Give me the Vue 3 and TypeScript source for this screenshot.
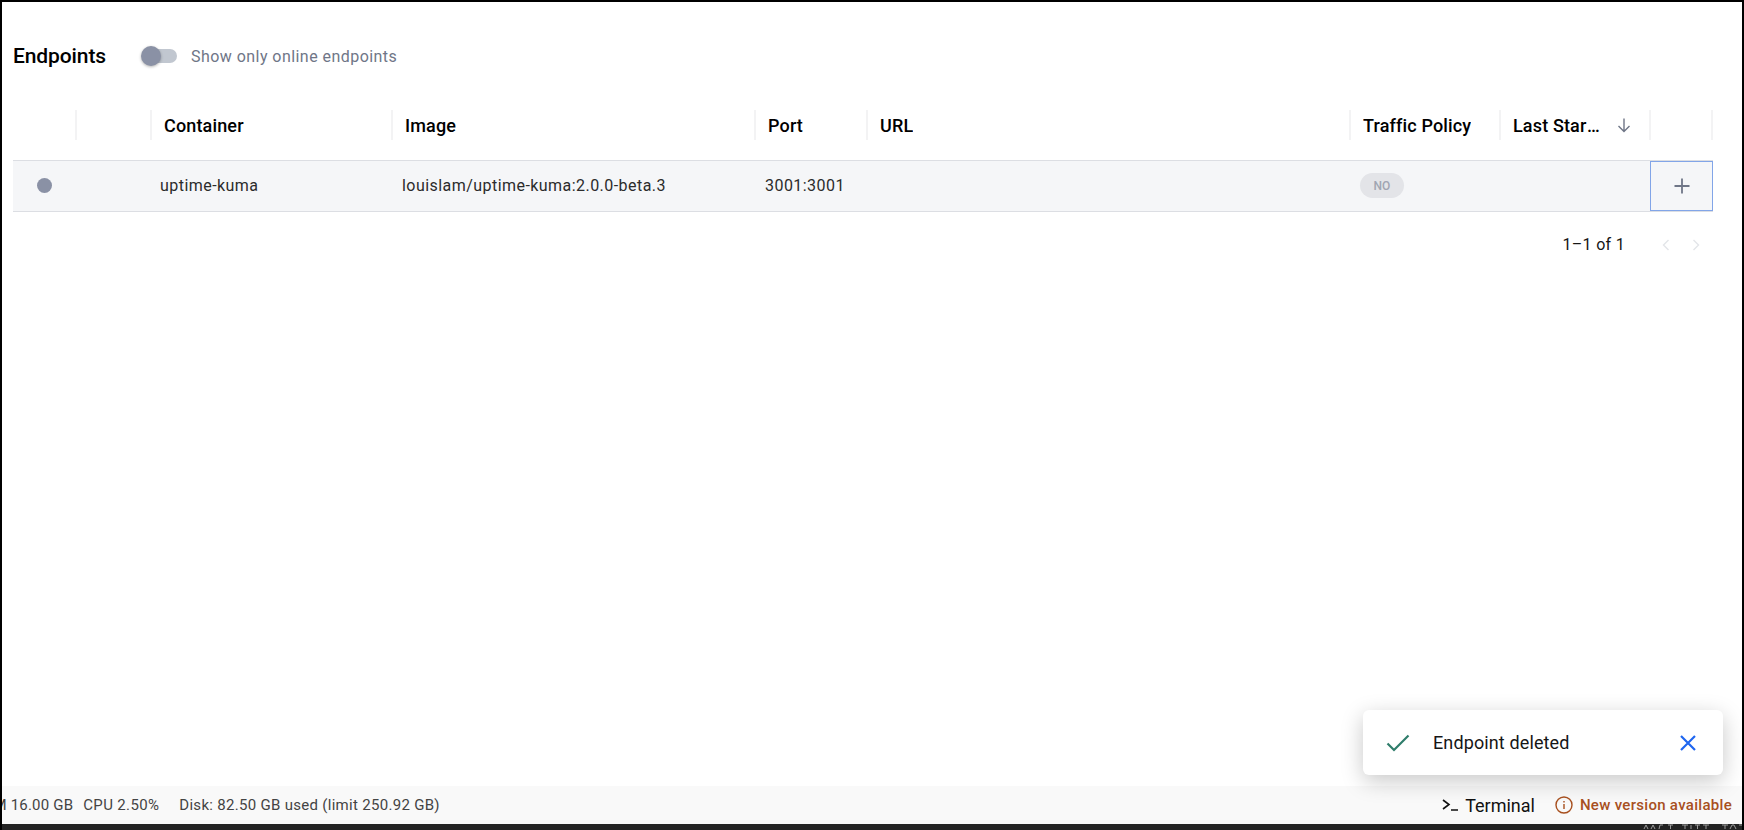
<script setup lang="ts">
interface Col { label: string; width: number; cls?: string }
const columns: Col[] = [
  { label: '', width: 64 },
  { label: '', width: 75 },
  { label: 'Container', width: 241 },
  { label: 'Image', width: 363 },
  { label: 'Port', width: 112 },
  { label: 'URL', width: 483 },
  { label: 'Traffic Policy', width: 150 },
  { label: 'Last Started', width: 150, cls: 'sorted' },
  { label: '', width: 62 },
]
</script>

<template>
  <div class="frame">
    <main class="content">
      <header class="title-row">
        <h2 class="title">Endpoints</h2>
        <label class="switch-row">
          <span class="switch"><span class="track"></span><span class="thumb"></span></span>
          <span class="switch-label">Show only online endpoints</span>
        </label>
      </header>

      <div class="head-row">
        <div v-for="(c, i) in columns" :key="i" class="head-cell" :class="c.cls" :style="{ width: c.width + 'px' }">
          <span class="head-label">{{ c.label }}</span>
          <svg v-if="c.cls" class="sort-icon" viewBox="0 0 16 16" fill="none" stroke="#6f7687" stroke-width="1.4">
            <path d="M8 1.500v13M2.500 9 8 14.500 13.500 9" />
          </svg>
        </div>
      </div>

      <div class="body-row">
        <div class="cell" style="width: 64px"><span class="dot"></span></div>
        <div class="cell" style="width: 74px"></div>
        <div class="cell" style="width: 242px">uptime-kuma</div>
        <div class="cell" style="width: 363px">louislam/uptime-kuma:2.0.0-beta.3</div>
        <div class="cell" style="width: 112px">3001:3001</div>
        <div class="cell" style="width: 483px"></div>
        <div class="cell" style="width: 150px"><span class="chip">NO</span></div>
        <div class="cell" style="width: 149px"></div>
        <button class="expand" type="button" aria-label="Expand">
          <svg viewBox="0 0 16 16" width="16" height="16" fill="none" stroke="#6f7687" stroke-width="1.8"><path d="M8 0.5v15M0.5 8h15" /></svg>
        </button>
      </div>

      <div class="pager">
        <span class="pager-text">1–1 of 1</span>
        <svg class="chev" viewBox="0 0 10 14" fill="none" stroke="#e3e5e9" stroke-width="1.4"><path d="M7.5 2 2.5 7l5 5" /></svg>
        <svg class="chev next" viewBox="0 0 10 14" fill="none" stroke="#e3e5e9" stroke-width="1.4"><path d="M2.5 2l5 5-5 5" /></svg>
      </div>
    </main>

    <footer class="status">
      <div class="stats">
        <span class="mem">RAM 16.00 GB</span>
        <span class="cpu">CPU 2.50%</span>
        <span class="disk">Disk: 82.50 GB used (limit 250.92 GB)</span>
      </div>
      <div class="actions">
        <span class="terminal">
          <svg viewBox="0 0 18 14" width="18" height="14" fill="none" stroke="#111" stroke-width="1.6"><path d="M1 2l6 4.5L1 11M9 12h7" /></svg>
          Terminal
        </span>
        <span class="update">
          <svg viewBox="0 0 18 18" width="18" height="18" fill="none" stroke="#a8501f" stroke-width="1.4"><circle cx="9" cy="9" r="8" /><path d="M9 8v5M9 5v1.6" /></svg>
          New version available
        </span>
      </div>
    </footer>

    <div class="strip">
      <svg class="strip-marks" viewBox="0 0 100 6" width="100" height="6" fill="none" stroke="#9a9a9a" stroke-width="1">
        <path d="M2 5l2-4 2 4M9 5l2-4 2 4M17 5l1-4h3M26 1h5M28.500 1v4M40 1h6M43 1v4M49 1v4M53 1h5M55.500 1v4M61 1h6M64 1v4M80 1h6M83 1v4M88 5l2-4h2l2 4M97 1h3" />
      </svg>
    </div>

    <div class="toast">
      <svg class="toast-check" viewBox="0 0 24 18" width="24" height="18" fill="none" stroke="#2f7d6b" stroke-width="2.2"><path d="M1.5 9.5 8 16 22.5 1.5" /></svg>
      <span class="toast-text">Endpoint deleted</span>
      <svg class="toast-close" viewBox="0 0 16 16" width="16" height="16" fill="none" stroke="#1f66f0" stroke-width="2.2"><path d="M1 1l14 14M15 1 1 15" /></svg>
    </div>
  </div>
</template>

<style>
html, body { margin: 0; background: #fff; overflow: hidden; }
</style>

<style scoped>
.frame {
  position: relative;
  box-sizing: border-box;
  width: 1744px;
  height: 830px;
  border: solid #000;
  border-width: 2px 2px 0 2px;
  background: #fff;
  display: flex;
  flex-direction: column;
  font-family: Roboto, "Liberation Sans", sans-serif;
  overflow: hidden;
  color: #161616;
}
.content { flex: 1; padding: 0 29px 0 11px; }
.title-row { display: flex; align-items: center; height: 54px; margin-top: 27px; }
.title { margin: 0; font-size: 21px; font-weight: 500; color: #000; width: 128px; letter-spacing: -.1px; }
.switch-row { display: flex; align-items: center; gap: 14px; }
.switch { position: relative; width: 36px; height: 20px; display: block; }
.track { position: absolute; left: 3px; right: 0; top: 3px; height: 14px; border-radius: 7px; background: #c1c7d0; }
.thumb { position: absolute; left: 0; top: 0; width: 20px; height: 20px; border-radius: 50%; background: #8a91a5; box-shadow: 0 1px 3px rgba(0,0,0,.3); }
.switch-label { font-size: 16px; color: #6f7687; letter-spacing: .45px; }

.head-row { display: flex; height: 30px; margin-top: 27px; }
.head-cell {
  box-sizing: border-box;
  display: flex;
  align-items: center;
  height: 30px;
  padding-left: 12px;
  border-right: 2px solid #f3f3f4;
  font-size: 18px;
  font-weight: 500;
  letter-spacing: .15px;
  color: #000;
}
.head-label { white-space: nowrap; overflow: hidden; text-overflow: ellipsis; }
.sorted .head-label { width: 88px; }
.sort-icon { width: 16px; height: 16px; margin-left: 15px; }

.body-row {
  display: flex;
  align-items: stretch;
  box-sizing: border-box;
  height: 52px;
  margin-top: 20px;
  background: #f5f6f8;
  border-top: 1px solid #dcdee3;
  border-bottom: 1px solid #dcdee3;
}
.cell {
  box-sizing: border-box;
  display: flex;
  align-items: center;
  padding-left: 9px;
  padding-bottom: 1px;
  font-size: 16px;
  letter-spacing: .45px;
  color: #2b2b2b;
}
.cell:first-child { padding-left: 24px; }
.dot { width: 15px; height: 15px; border-radius: 50%; background: #8a91a5; }
.chip {
  display: inline-flex;
  align-items: center;
  justify-content: center;
  width: 44px;
  height: 25px;
  border-radius: 13px;
  background: #e3e4e8;
  color: #a0a5b2;
  font-size: 12px;
  font-weight: 500;
  letter-spacing: 0;
}
.expand {
  box-sizing: border-box;
  flex: 1;
  display: flex;
  align-items: center;
  justify-content: center;
  padding: 0;
  background: transparent;
  border: 1px solid #82a5e8;
}

.pager { display: flex; align-items: center; justify-content: flex-end; height: 65px; padding-right: 12px; }
.pager-text { font-size: 16px; color: #161616; margin-right: 36px; letter-spacing: .3px; }
.chev { width: 10px; height: 14px; }
.next { margin-left: 20px; }

.status {
  display: flex;
  align-items: center;
  justify-content: space-between;
  height: 38px;
  background: #f9f9f9;
  font-size: 15px;
  color: #444;
}
.stats { display: flex; overflow: hidden; }
.mem { margin-left: -28px; margin-right: 10px; letter-spacing: .2px; }
.cpu { margin-right: 20px; letter-spacing: .35px; }
.disk { letter-spacing: .3px; }
.actions { display: flex; align-items: center; gap: 20px; padding-right: 10px; }
.terminal { display: flex; align-items: center; gap: 5px; font-size: 18px; color: #111; }
.update { display: flex; align-items: center; gap: 7px; font-size: 15px; font-weight: 500; color: #a8501f; letter-spacing: .3px; }

.strip {
  flex: none;
  position: relative;
  box-sizing: border-box;
  height: 6px;
  background: #232323;
  display: flex;
  justify-content: flex-end;
}
.strip-marks { display: block; flex: none; height: 6px; }

.toast {
  position: absolute;
  right: 19px;
  bottom: 55px;
  box-sizing: border-box;
  width: 360px;
  height: 65px;
  display: flex;
  align-items: center;
  padding: 0 27px 0 23px;
  background: #fff;
  border-radius: 6px;
  box-shadow: 0 6px 22px rgba(0,0,0,.22);
}
.toast-check { flex: none; }
.toast-text { flex: 1; margin-left: 23px; font-size: 18px; letter-spacing: .12px; color: #161616; }
</style>
